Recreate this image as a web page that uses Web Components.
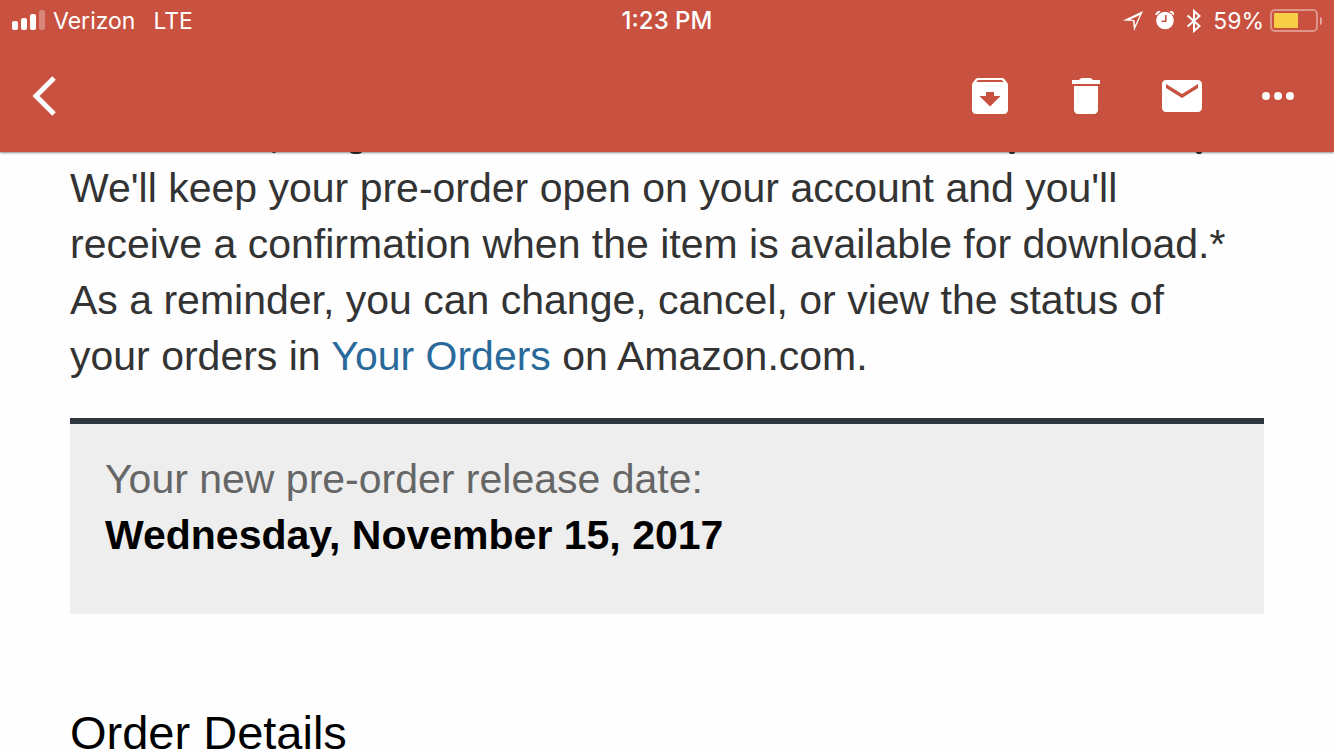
<!DOCTYPE html>
<html lang="en">
<head>
<meta charset="utf-8">
<meta name="viewport" content="width=device-width, initial-scale=1">
<title>Mail</title>
<style>
    body {
        margin: 0;
        background: #fefefe;
        font-family: "Liberation Sans", Arial, sans-serif;
        overflow: hidden;
    }
</style>
</head>
<body>
<mail-header>
    <status-bar carrier="Verizon" network="LTE" time="1:23 PM" battery="59"></status-bar>
    <tool-bar></tool-bar>
</mail-header>
<mail-message>
    <p>We'll keep your pre-order open on your account and you'll receive a confirmation when the item is available for download.* As a reminder, you can change, cancel, or view the status of your orders in <a href="#orders">Your Orders</a> on Amazon.com.</p>
    <release-card>
        <span slot="label">Your new pre-order release date:</span>
        <strong slot="date">Wednesday, November 15, 2017</strong>
    </release-card>
    <h2>Order Details</h2>
</mail-message>

<script>
const icons = {
    back: '<path d="M54 78 36 96l18 18" transform="translate(-20 -72)" fill="none" stroke="#fff" stroke-width="5"/>',
    archive: '<path transform="scale(2)" d="M20.54 5.23l-1.39-1.68C18.88 3.21 18.47 3 18 3H6c-.47 0-.88.21-1.16.55L3.46 5.23C3.17 5.57 3 6.02 3 6.5V19c0 1.1.9 2 2 2h14c1.1 0 2-.9 2-2V6.5c0-.48-.17-.93-.46-1.27zM12 17.3L6.7 12H10v-2h4v2h3.3L12 17.3zM5.12 5l.81-1h12l.94 1H5.12z"/>',
    trash: '<path transform="scale(2)" d="M6 19c0 1.1.9 2 2 2h8c1.1 0 2-.9 2-2V7H6v12zM19 4h-3.500c-.5-.6-1-1-1.700-1h-3.600c-.7 0-1.200.4-1.700 1H5v2h14V4z"/>',
    mail: '<path transform="scale(2)" d="M20 4H4c-1.1 0-2 .9-2 2v12c0 1.1.9 2 2 2h16c1.1 0 2-.9 2-2V6c0-1.1-.9-2-2-2zm0 4l-8 5-8-5V6l8 5 8-5v2z"/>',
    more: '<circle cx="12" cy="24" r="4"/><circle cx="24" cy="24" r="4"/><circle cx="36" cy="24" r="4"/>'
}

class MailHeader extends HTMLElement {
    constructor() {
        super()
        this.attachShadow({ mode: 'open' })
        this.shadowRoot.innerHTML = `
            <style>
                :host {
                    display: block;
                    position: relative;
                    z-index: 1;
                    background: #c9513f;
                    color: #fff;
                    box-shadow: 0 1px 2px rgba(0, 0, 0, .45);
                }
            </style>
            <slot></slot>
        `
    }
}

class StatusBar extends HTMLElement {
    constructor() {
        super()
        this.attachShadow({ mode: 'open' })
    }

    connectedCallback() {
        const level = Number(this.getAttribute('battery'))

        this.shadowRoot.innerHTML = `
            <style>
                :host {
                    display: grid;
                    grid-template-columns: 1fr auto 1fr;
                    align-items: center;
                    box-sizing: border-box;
                    height: 40px;
                    padding: 2px 12px 0;
                    font: 23px/38px Inter, sans-serif;
                    white-space: nowrap;
                }
                div {
                    display: flex;
                    align-items: center;
                }
                .left span { margin-left: 8px; }
                .left span + span { margin-left: 18px; }
                .time {
                    font-size: 24px;
                    font-weight: 500;
                }
                .right { justify-content: flex-end; }
                .right span { margin: 0 6px 0 12px; }
                svg {
                    display: block;
                    fill: currentColor;
                }
                .alarm { margin: 0 11px; }
            </style>
            <div class="left">
                <svg width="33" height="22" viewBox="0 0 33 22" aria-hidden="true">
                    <rect y="11" width="6" height="9" rx="2"/>
                    <rect x="9" y="8" width="6" height="12" rx="2"/>
                    <rect x="18" y="4" width="6" height="16" rx="2"/>
                    <rect x="27" width="6" height="20" rx="2" opacity=".3"/>
                </svg>
                <span>${this.getAttribute('carrier')}</span>
                <span>${this.getAttribute('network')}</span>
            </div>
            <div class="time">${this.getAttribute('time')}</div>
            <div class="right">
                <svg width="20" height="20" viewBox="0 0 20 20" aria-hidden="true">
                    <path fill-rule="evenodd" d="M0 9.500 20 0 11 20l-1-10zm7-.8 4.500.3.500 5.500 4.800-10.500z"/>
                </svg>
                <svg class="alarm" width="20" height="20" viewBox="0 0 20 20" aria-hidden="true">
                    <circle cx="11" cy="9.500" r="8.800"/>
                    <path d="M1.800 3.700A10 10 0 0 1 6 0M20.200 3.700A10 10 0 0 0 16 0" fill="none" stroke="currentColor" stroke-width="2"/>
                    <path d="M11.800 4v6.300H7.600" fill="none" stroke="#c9513f" stroke-width="1.600"/>
                </svg>
                <svg width="16" height="24" viewBox="0 0 16 24" aria-hidden="true">
                    <path d="M2.500 6.500 14.500 17 9 22V2l5.500 5L2.500 17.500" fill="none" stroke="currentColor" stroke-width="2"/>
                </svg>
                <span>${level}%</span>
                <svg width="52" height="24" viewBox="0 0 52 24" aria-hidden="true">
                    <rect x="1" y="1" width="46" height="21" rx="4" fill="none" stroke="#fff" stroke-width="2" opacity=".4"/>
                    <path d="M50 8c3 1 3 7 0 8z" opacity=".5"/>
                    <rect x="4" y="4" width="${Math.round(41 * level / 100)}" height="15" rx="1" fill="#f8ce46"/>
                </svg>
            </div>
        `
    }
}

class ToolBar extends HTMLElement {
    constructor() {
        super()
        this.attachShadow({ mode: 'open' })
        this.shadowRoot.innerHTML = `
            <style>
                :host {
                    display: flex;
                    align-items: center;
                    gap: 48px;
                    height: 112px;
                    padding: 0 32px 0 20px;
                }
                button {
                    padding: 0;
                    border: 0;
                    background: none;
                    color: inherit;
                    cursor: pointer;
                }
                button:first-of-type { margin-right: auto; }
                svg {
                    display: block;
                    fill: currentColor;
                }
            </style>
            ${this.button('back', 'Back')}
            ${this.button('archive', 'Archive')}
            ${this.button('trash', 'Delete')}
            ${this.button('mail', 'Mark as unread')}
            ${this.button('more', 'More')}
        `
    }

    button(icon, label) {
        return `<button type="button" aria-label="${label}"><svg width="48" height="48" viewBox="0 0 48 48">${icons[icon]}</svg></button>`
    }
}

class MailMessage extends HTMLElement {
    constructor() {
        super()
        this.attachShadow({ mode: 'open' })
        this.shadowRoot.innerHTML = `
            <style>
                :host {
                    display: block;
                    padding: 0 70px;
                    font-size: 41px;
                    line-height: 56px;
                    color: #333;
                }
                /* descenders of the line scrolled under the header */
                .tails {
                    display: block;
                    height: 8px;
                    fill: #333;
                }
                ::slotted(p) {
                    margin: 0 0 34px;
                    padding-right: 16px;
                }
                ::slotted(h2) {
                    margin: 91px 0 0;
                    font-size: 47px;
                    font-weight: 400;
                    color: #000;
                }
            </style>
            <svg class="tails" width="1194" height="8" aria-hidden="true">
                <ellipse cx="204" cy="0" rx="2" ry="1"/>
                <ellipse cx="286" cy="0" rx="6" ry="2"/>
                <ellipse cx="942" cy="0" rx="3" ry="2"/>
                <ellipse cx="1129" cy="0" rx="3" ry="2"/>
            </svg>
            <slot></slot>
        `
        this.querySelectorAll('a').forEach(function(link) {
            link.style.color = '#2a6a9b'
            link.style.textDecoration = 'none'
        })
    }
}

class ReleaseCard extends HTMLElement {
    constructor() {
        super()
        this.attachShadow({ mode: 'open' })
        this.shadowRoot.innerHTML = `
            <style>
                :host {
                    display: block;
                    padding: 27px 35px 51px;
                    border-top: 6px solid #2f3640;
                    background: #eee;
                }
                ::slotted(*) { display: block; }
                ::slotted([slot=label]) { color: #666; }
                ::slotted([slot=date]) { color: #000; }
            </style>
            <slot name="label"></slot>
            <slot name="date"></slot>
        `
    }
}

window.customElements.define('mail-header', MailHeader)
window.customElements.define('status-bar', StatusBar)
window.customElements.define('tool-bar', ToolBar)
window.customElements.define('mail-message', MailMessage)
window.customElements.define('release-card', ReleaseCard)
</script>
</body>
</html>
